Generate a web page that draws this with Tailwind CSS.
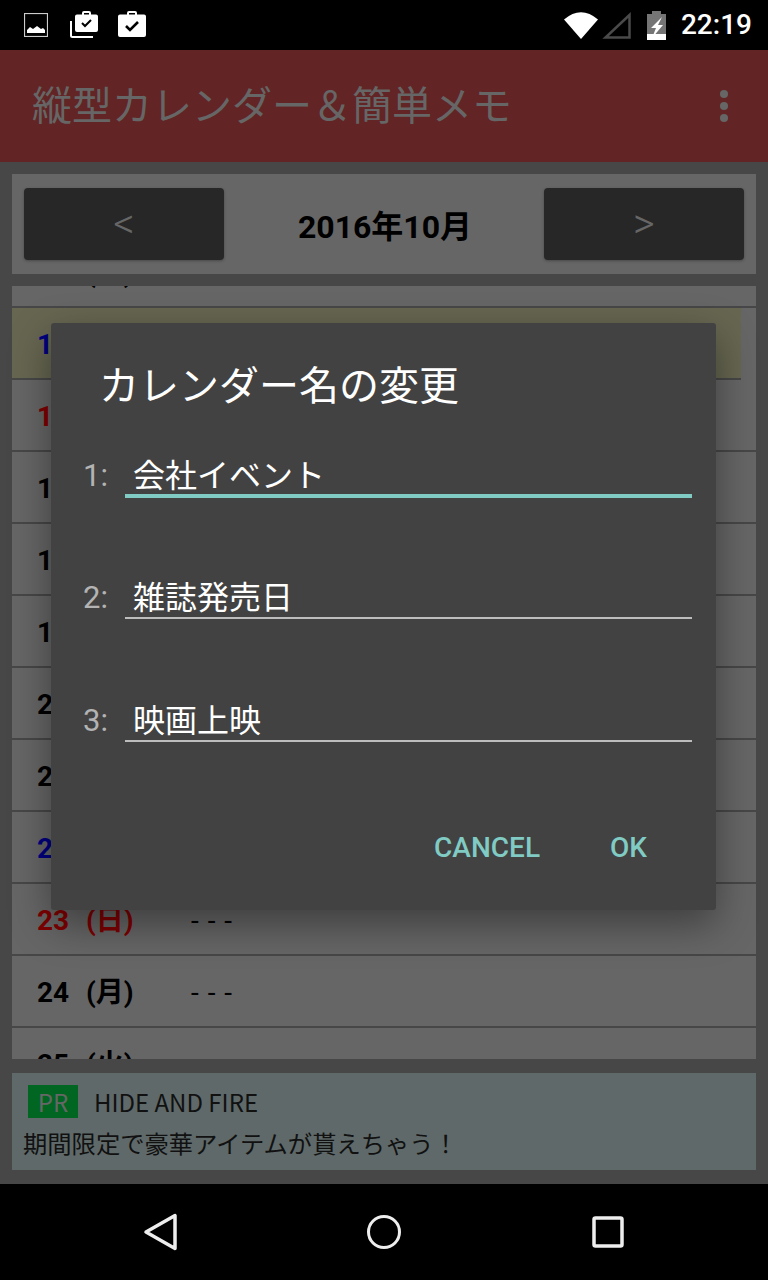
<!DOCTYPE html>
<html lang="ja">

<head>
	<meta charset="UTF-8">
	<meta name="viewport" content="width=device-width, initial-scale=1.0">
	<title>縦型カレンダー＆簡単メモ</title>
	<script src="https://cdn.jsdelivr.net/npm/@tailwindcss/browser@4"></script>
</head>

<body class="bg-black">
	<div class="relative w-[768px] h-[1280px] overflow-hidden flex flex-col font-['Roboto','Noto_Sans_CJK_JP',sans-serif]">

		<!-- status bar -->
		<div class="h-[50px] bg-black flex items-center pl-[24px] pr-[16px] shrink-0">
			<svg class="w-[24px] h-[24px]" viewBox="0 0 24 24">
				<rect x="0.5" y="0.5" width="23" height="23" fill="none" stroke="#ccc" stroke-width="1.2" />
				<path d="M3 20v-3l3-3 3 2 4-3 4 3 2-1 2 2v3z" fill="#fff" />
			</svg>
			<svg class="w-[28px] h-[28px] ml-[22px] -mt-[2px]" viewBox="0 0 28 28">
				<path d="M1 11v14.500q0 1.500 1.500 1.500H23" fill="none" stroke="#fff" stroke-width="2" />
				<path d="M12 4.500V3q0-2 2-2h5q2 0 2 2v1.500h5q2 0 2 2V20q0 2-2 2H7q-2 0-2-2V6.500q0-2 2-2zM14 4.500h5V3h-5z" fill="#fff" fill-rule="evenodd" />
				<path d="M12 13l3 3 6-6" fill="none" stroke="#000" stroke-width="2" />
			</svg>
			<svg class="w-[28px] h-[28px] ml-[20px] -mt-[2px]" viewBox="0 0 28 28">
				<path d="M9 4.500V3q0-2 2-2h6q2 0 2 2v1.500h7q2 0 2 2V25q0 2-2 2H2q-2 0-2-2V6.500q0-2 2-2zM11 4.500h6V3h-6z" fill="#fff" fill-rule="evenodd" />
				<path d="M8 16l4 4 8-8" fill="none" stroke="#000" stroke-width="2.600" />
			</svg>
			<svg class="w-[34px] h-[28px] ml-auto" viewBox="0 0 34 28">
				<path d="M0 8.500Q17-6 34 8.500L17 28z" fill="#fff" />
			</svg>
			<svg class="w-[29px] h-[28px] ml-[4px]" viewBox="0 0 29 28">
				<path d="M27.500 4V26.500H3.500z" fill="none" stroke="#4a4a4a" stroke-width="2.500" />
			</svg>
			<svg class="w-[19px] h-[29px] ml-[16px]" viewBox="0 0 19 29">
				<path d="M5 0h9v3h5v26H0V3h5z" fill="#757575" />
				<path d="M0 23h19v6H0z" fill="#fff" />
				<path d="M15 6L4 17h5l-4 10 11-13h-5l4-8z" fill="#fff" />
			</svg>
			<span class="ml-[15px] text-[28px] leading-none font-medium text-white">22:19</span>
		</div>

		<!-- app bar -->
		<div class="h-[112px] bg-[#622424] flex items-center pl-[32px] pr-[40px] pt-[2px] shrink-0">
			<span class="text-[40px] leading-none text-[#666666]">縦型カレンダー＆簡単メモ</span>
			<div class="ml-auto -mt-[2px] flex flex-col gap-[4px]">
				<span class="w-[8px] h-[8px] rounded-full bg-[#666666]"></span>
				<span class="w-[8px] h-[8px] rounded-full bg-[#666666]"></span>
				<span class="w-[8px] h-[8px] rounded-full bg-[#666666]"></span>
			</div>
		</div>

		<!-- content -->
		<div class="h-[1022px] bg-[#474747] px-[12px] pt-[12px] flex flex-col shrink-0">
			<div class="h-[100px] bg-[#666666] flex items-center justify-between px-[12px] shrink-0">
				<div class="w-[200px] h-[72px] rounded-[4px] bg-[#272727] shadow-[0_1px_3px_rgba(0,0,0,0.3)] flex items-center justify-center text-[42px] font-light leading-none text-[#666666]">&lt;</div>
				<span class="pl-[2px] pt-[5px] text-[32px] font-bold text-black">2016年10月</span>
				<div class="w-[200px] h-[72px] rounded-[4px] bg-[#272727] shadow-[0_1px_3px_rgba(0,0,0,0.3)] flex items-center justify-center text-[42px] font-light leading-none text-[#666666]">&gt;</div>
			</div>

			<div class="h-[773px] mt-[12px] bg-[#666666] overflow-hidden shrink-0">
				<div class="-mt-[50px] h-[72px] pt-[4px] border-b-2 border-[#474747] flex items-center pl-[25px] text-[28px] font-bold text-black">
					<span class="w-[49px]">14</span><span class="w-[105px]">(金)</span><span class="font-normal tracking-[1px]">- - -</span>
				</div>
				<div class="h-[72px] pt-[4px] border-b-2 border-[#474747] flex items-center pl-[25px] text-[28px] font-bold text-[#000080] w-[729px] bg-[#666651]">
					<span class="w-[49px]">15</span><span class="w-[105px]">(土)</span><span class="font-normal tracking-[1px] text-black">- - -</span>
				</div>
				<div class="h-[72px] pt-[4px] border-b-2 border-[#474747] flex items-center pl-[25px] text-[28px] font-bold text-[#800000]">
					<span class="w-[49px]">16</span><span class="w-[105px]">(日)</span><span class="font-normal tracking-[1px] text-black">- - -</span>
				</div>
				<div class="h-[72px] pt-[4px] border-b-2 border-[#474747] flex items-center pl-[25px] text-[28px] font-bold text-black">
					<span class="w-[49px]">17</span><span class="w-[105px]">(月)</span><span class="font-normal tracking-[1px]">- - -</span>
				</div>
				<div class="h-[72px] pt-[4px] border-b-2 border-[#474747] flex items-center pl-[25px] text-[28px] font-bold text-black">
					<span class="w-[49px]">18</span><span class="w-[105px]">(火)</span><span class="font-normal tracking-[1px]">- - -</span>
				</div>
				<div class="h-[72px] pt-[4px] border-b-2 border-[#474747] flex items-center pl-[25px] text-[28px] font-bold text-black">
					<span class="w-[49px]">19</span><span class="w-[105px]">(水)</span><span class="font-normal tracking-[1px]">- - -</span>
				</div>
				<div class="h-[72px] pt-[4px] border-b-2 border-[#474747] flex items-center pl-[25px] text-[28px] font-bold text-black">
					<span class="w-[49px]">20</span><span class="w-[105px]">(木)</span><span class="font-normal tracking-[1px]">- - -</span>
				</div>
				<div class="h-[72px] pt-[4px] border-b-2 border-[#474747] flex items-center pl-[25px] text-[28px] font-bold text-black">
					<span class="w-[49px]">21</span><span class="w-[105px]">(金)</span><span class="font-normal tracking-[1px]">- - -</span>
				</div>
				<div class="h-[72px] pt-[4px] border-b-2 border-[#474747] flex items-center pl-[25px] text-[28px] font-bold text-[#000080]">
					<span class="w-[49px]">22</span><span class="w-[105px]">(土)</span><span class="font-normal tracking-[1px] text-black">- - -</span>
				</div>
				<div class="h-[72px] pt-[4px] border-b-2 border-[#474747] flex items-center pl-[25px] text-[28px] font-bold text-[#800000]">
					<span class="w-[49px]">23</span><span class="w-[105px]">(日)</span><span class="font-normal tracking-[1px] text-black">- - -</span>
				</div>
				<div class="h-[72px] pt-[4px] border-b-2 border-[#474747] flex items-center pl-[25px] text-[28px] font-bold text-black">
					<span class="w-[49px]">24</span><span class="w-[105px]">(月)</span><span class="font-normal tracking-[1px]">- - -</span>
				</div>
				<div class="h-[72px] pt-[4px] border-b-2 border-[#474747] flex items-center pl-[25px] text-[28px] font-bold text-black">
					<span class="w-[49px]">25</span><span class="w-[105px]">(火)</span><span class="font-normal tracking-[1px]">- - -</span>
				</div>
			</div>

			<!-- ad -->
			<div class="h-[97px] mt-[14px] bg-[#5f6969] pl-[11px] pt-[12px] shrink-0">
				<div class="flex items-center pl-[5px]">
					<span class="w-[50px] h-[33px] bg-[#006622] text-[#666666] text-[24px] leading-[33px] text-center font-['Noto_Sans_CJK_JP',sans-serif]">PR</span>
					<span class="ml-[16px] text-[24px] leading-[33px] text-[#111111] font-['Noto_Sans_CJK_JP',sans-serif]">HIDE AND FIRE</span>
				</div>
				<p class="mt-[8px] text-[24.3px] leading-[34px] text-[#111111] font-['Noto_Sans_CJK_JP',sans-serif]">期間限定で豪華アイテムが貰えちゃう！</p>
			</div>
		</div>

		<!-- nav bar -->
		<div class="flex-1 bg-black flex items-center">
			<svg class="w-[34px] h-[38px] ml-[143px]" viewBox="0 0 34 38">
				<path d="M32 2.500V35.500L3 19z" fill="none" stroke="#eee" stroke-width="3.500" stroke-linejoin="round" />
			</svg>
			<svg class="w-[36px] h-[36px] ml-[189px]" viewBox="0 0 36 36">
				<circle cx="18" cy="18" r="15.500" fill="none" stroke="#eee" stroke-width="3" />
			</svg>
			<svg class="w-[32px] h-[32px] ml-[190px]" viewBox="0 0 32 32">
				<rect x="2" y="2" width="28" height="28" rx="1.500" fill="none" stroke="#eee" stroke-width="3.500" />
			</svg>
		</div>

		<!-- dialog -->
		<div class="absolute left-[51px] top-[323px] w-[665px] h-[587px] rounded-[3px] bg-[#424242] shadow-[0_14px_40px_rgba(0,0,0,0.4)] flex flex-col">
			<h2 class="mt-[40px] ml-[48px] text-[40px] leading-[48px] text-white">カレンダー名の変更</h2>
			<div class="mt-[36px] ml-[32px] mr-[24px] flex h-[51px]">
				<span class="w-[42px] pt-[7px] text-[31px] leading-[44px] text-[#b3b3b3]">1:</span>
				<div class="flex-1 border-b-4 border-[#80cbc4] pl-[8px] pt-[7px] text-[32px] leading-[44px] text-white">会社イベント</div>
			</div>
			<div class="mt-[70px] ml-[32px] mr-[24px] flex h-[51px]">
				<span class="w-[42px] pt-[8px] text-[31px] leading-[44px] text-[#b3b3b3]">2:</span>
				<div class="flex-1 border-b-2 border-[#bdbdbd] pl-[8px] pt-[8px] text-[32px] leading-[44px] text-white">雑誌発売日</div>
			</div>
			<div class="mt-[72px] ml-[32px] mr-[24px] flex h-[51px]">
				<span class="w-[42px] pt-[8px] text-[31px] leading-[44px] text-[#b3b3b3]">3:</span>
				<div class="flex-1 border-b-2 border-[#bdbdbd] pl-[8px] pt-[8px] text-[32px] leading-[44px] text-white">映画上映</div>
			</div>
			<div class="mt-[86px] flex justify-end pr-[69px] text-[28px] leading-[40px] font-medium text-[#80cbc4]">
				<span>CANCEL</span>
				<span class="ml-[70px]">OK</span>
			</div>
		</div>
	</div>
</body>

</html>
